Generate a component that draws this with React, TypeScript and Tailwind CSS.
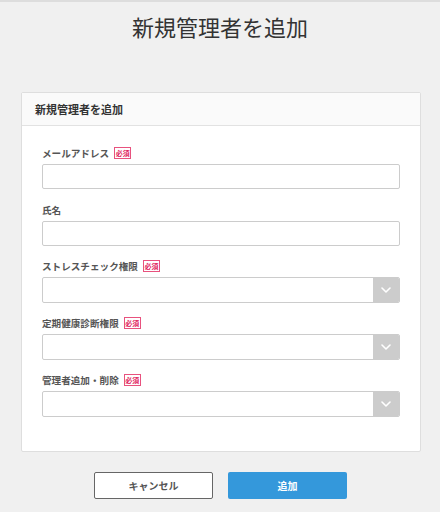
import React from "react";

const font = { fontFamily: '"Noto Sans CJK JP", "Noto Sans", sans-serif' };

function Badge() {
  return (
    <span className="ml-[5px] inline-flex h-[12px] w-[17px] items-center justify-center border border-[#e8527e] text-[7px] font-bold leading-none text-[#e0245e]">
      必須
    </span>
  );
}

function Label({ text, required }: { text: string; required?: boolean }) {
  return (
    <div className="mb-[3px] flex h-[16px] items-center text-[9.6px] font-bold leading-[16px] text-[#555]">
      <span>{text}</span>
      {required && <Badge />}
    </div>
  );
}

function TextInput() {
  return <div className="h-[25px] w-[358px] rounded-[2px] border border-[#cccccc] bg-white" />;
}

function SelectBox() {
  return (
    <div className="flex h-[26px] w-[358px] overflow-hidden rounded-[2px] border border-[#cccccc] bg-white">
      <div className="flex-1" />
      <div className="flex w-[26px] items-center justify-center bg-[#cccccc]">
        <svg width="10" height="6" viewBox="0 0 10 6" fill="none">
          <path d="M1 1l4 4 4-4" stroke="#ffffff" strokeWidth="1.6" strokeLinecap="round" strokeLinejoin="round" />
        </svg>
      </div>
    </div>
  );
}

export default function App() {
  return (
    <div className="min-h-[512px] w-[440px] border-t-2 border-[#dddddd] bg-[#f0f0f0]" style={font}>
      <h1 className="pt-[8px] text-center text-[22px] font-normal leading-[32px] text-[#333]">新規管理者を追加</h1>
      <div className="ml-[21px] mt-[50px] w-[400px] rounded-[2px] border border-[#dedede] bg-white">
        <div className="flex h-[33px] items-center border-b border-[#e2e2e2] bg-[#fafafa] pl-[13px] text-[11px] font-bold text-[#333]">
          新規管理者を追加
        </div>
        <div className="pb-[34px] pl-[20px] pt-[19px]">
          <Label text="メールアドレス" required />
          <TextInput />
          <div className="h-[13px]" />
          <Label text="氏名" />
          <TextInput />
          <div className="h-[12px]" />
          <Label text="ストレスチェック権限" required />
          <SelectBox />
          <div className="h-[12px]" />
          <Label text="定期健康診断権限" required />
          <SelectBox />
          <div className="h-[12px]" />
          <Label text="管理者追加・削除" required />
          <SelectBox />
        </div>
      </div>
      <div className="mt-[20px] flex justify-center gap-[15px] pl-[1px]">
        <button className="h-[27px] w-[119px] rounded-[2px] border border-[#666] bg-white text-[10px] font-bold text-[#555]">
          キャンセル
        </button>
        <button className="h-[27px] w-[119px] rounded-[2px] bg-[#3498db] text-[10px] font-bold text-white">
          追加
        </button>
      </div>
    </div>
  );
}
